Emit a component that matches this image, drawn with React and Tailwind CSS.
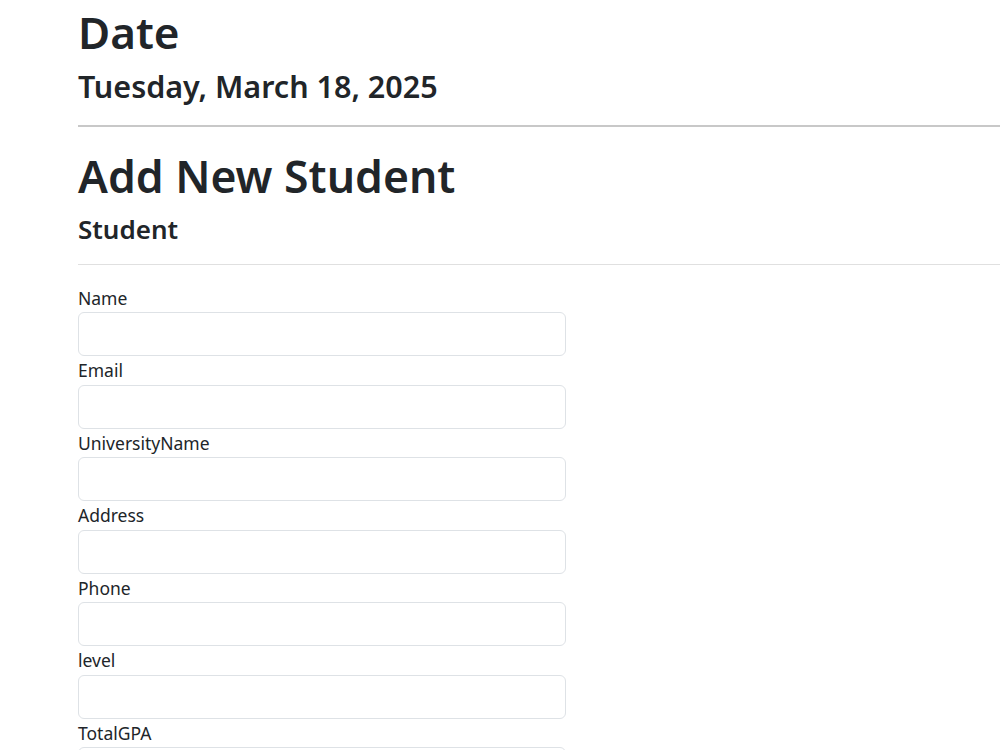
const fields = ['Name', 'Email', 'UniversityName', 'Address', 'Phone', 'level', 'TotalGPA'];

function Field({ label }) {
  return (
    <div>
      <label className="block text-[17.5px] leading-[28.5px] h-[28.5px]">{label}</label>
      <input
        type="text"
        className="block w-[488px] h-[44px] rounded-[6px] border border-[#dee2e6] bg-white px-3 outline-none"
      />
    </div>
  );
}

export default function App() {
  return (
    <div className="h-[750px] bg-white text-[#212529] font-['Noto_Sans',sans-serif] overflow-hidden">
      <div className="pl-[78px]">
        <h1 className="text-[44px] font-semibold leading-[60px] pt-[1.5px]">Date</h1>
        <h3 className="text-[30.5px] font-semibold leading-[40px] mt-[4.5px]">Tuesday, March 18, 2025</h3>
        <hr className="mt-[19px] border-0 h-[2px] bg-[#c8c8c8]" />
        <h1 className="text-[44.5px] font-semibold leading-[60px] mt-[19px]">Add New Student</h1>
        <h4 className="text-[26px] font-semibold leading-[34px] mt-[6px]">Student</h4>
        <hr className="mt-[18px] border-0 h-px bg-[#e0e0e0]" />
        <div className="mt-[18.5px]">
          {fields.map((f) => (
            <Field key={f} label={f} />
          ))}
        </div>
      </div>
    </div>
  );
}
